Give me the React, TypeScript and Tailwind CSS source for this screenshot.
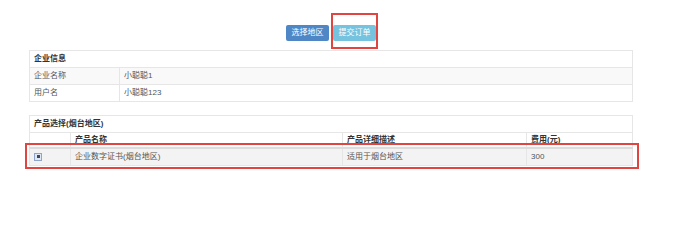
import React from 'react';

// 企业信息 + 产品选择 表格页
const company = [
  { label: '企业名称', value: '小聪聪1' },
  { label: '用户名', value: '小聪聪123' },
];

const products = [
  { id: 'prd-1', name: '企业数字证书(烟台地区)', desc: '适用于烟台地区', fee: '300' },
];

const cell = 'border border-[#e6e6e6] px-[4px] py-0 text-left align-middle';

export default function App() {
  return (
    <div
      className="w-[692px] h-[240px] bg-white text-[8px] text-[#555]"
      style={{ fontFamily: '"Liberation Sans", "Noto Sans CJK SC", sans-serif' }}
    >
      <div className="ml-[29px] w-[604px] pt-[25px]">
        {/* 按钮 */}
        <div className="flex justify-center gap-[4px]">
          <button className="h-[16px] w-[43px] rounded-[2px] bg-[#4f86c6] text-white text-[8px] leading-[16px]">
            选择地区
          </button>
          <div className="relative">
            <button className="h-[16px] w-[43px] rounded-[2px] bg-[#75c3df] text-white text-[8px] leading-[16px]">
              提交订单
            </button>
            <div className="absolute left-[-2px] right-[-2px] top-[-12px] bottom-[-8px] border-2 border-[#e0453f]" />
          </div>
        </div>

        {/* 企业信息 */}
        <table className="mt-[9px] w-full border-collapse">
          <tbody>
            <tr className="h-[17px]">
              <th colSpan={2} className={`${cell} font-bold text-[#333]`}>企业信息</th>
            </tr>
            {company.map((row, i) => (
              <tr key={row.label} className={`h-[17px] ${i === 0 ? 'bg-[#f9f9f9]' : 'bg-white'}`}>
                <td className={`${cell} w-[90px]`}>{row.label}</td>
                <td className={cell}>{row.value}</td>
              </tr>
            ))}
          </tbody>
        </table>

        {/* 产品选择 */}
        <div className="relative mt-[13px]">
          <table className="w-full border-collapse">
            <thead>
              <tr className="h-[17px]">
                <th colSpan={4} className={`${cell} font-bold text-[#333]`}>产品选择(烟台地区)</th>
              </tr>
              <tr className="h-[15px]">
                <th className={`${cell} w-[41px] border-b-2 border-b-[#dcdcdc]`} />
                <th className={`${cell} w-[272px] align-bottom font-bold text-[#333] leading-[10px] border-b-2 border-b-[#dcdcdc]`}>产品名称</th>
                <th className={`${cell} w-[184px] align-bottom font-bold text-[#333] leading-[10px] border-b-2 border-b-[#dcdcdc]`}>产品详细描述</th>
                <th className={`${cell} align-bottom font-bold text-[#333] leading-[10px] border-b-2 border-b-[#dcdcdc]`}>费用(元)</th>
              </tr>
            </thead>
            <tbody>
              {products.map(p => (
                <tr key={p.id} className="h-[18px] bg-[#f3f3f3]">
                  <td className={cell}>
                    <span className="flex h-[8px] w-[8px] items-center justify-center border border-[#8fa6c8] bg-[#dfe7f2]">
                      <span className="h-[3px] w-[3px] bg-[#3d4a5c]" />
                    </span>
                  </td>
                  <td className={cell}>{p.name}</td>
                  <td className={cell}>{p.desc}</td>
                  <td className={cell}>{p.fee}</td>
                </tr>
              ))}
            </tbody>
          </table>
          <div className="absolute left-[-4px] right-[-6px] top-[28px] bottom-[-3px] border-2 border-[#e0453f]" />
        </div>
      </div>
    </div>
  );
}
